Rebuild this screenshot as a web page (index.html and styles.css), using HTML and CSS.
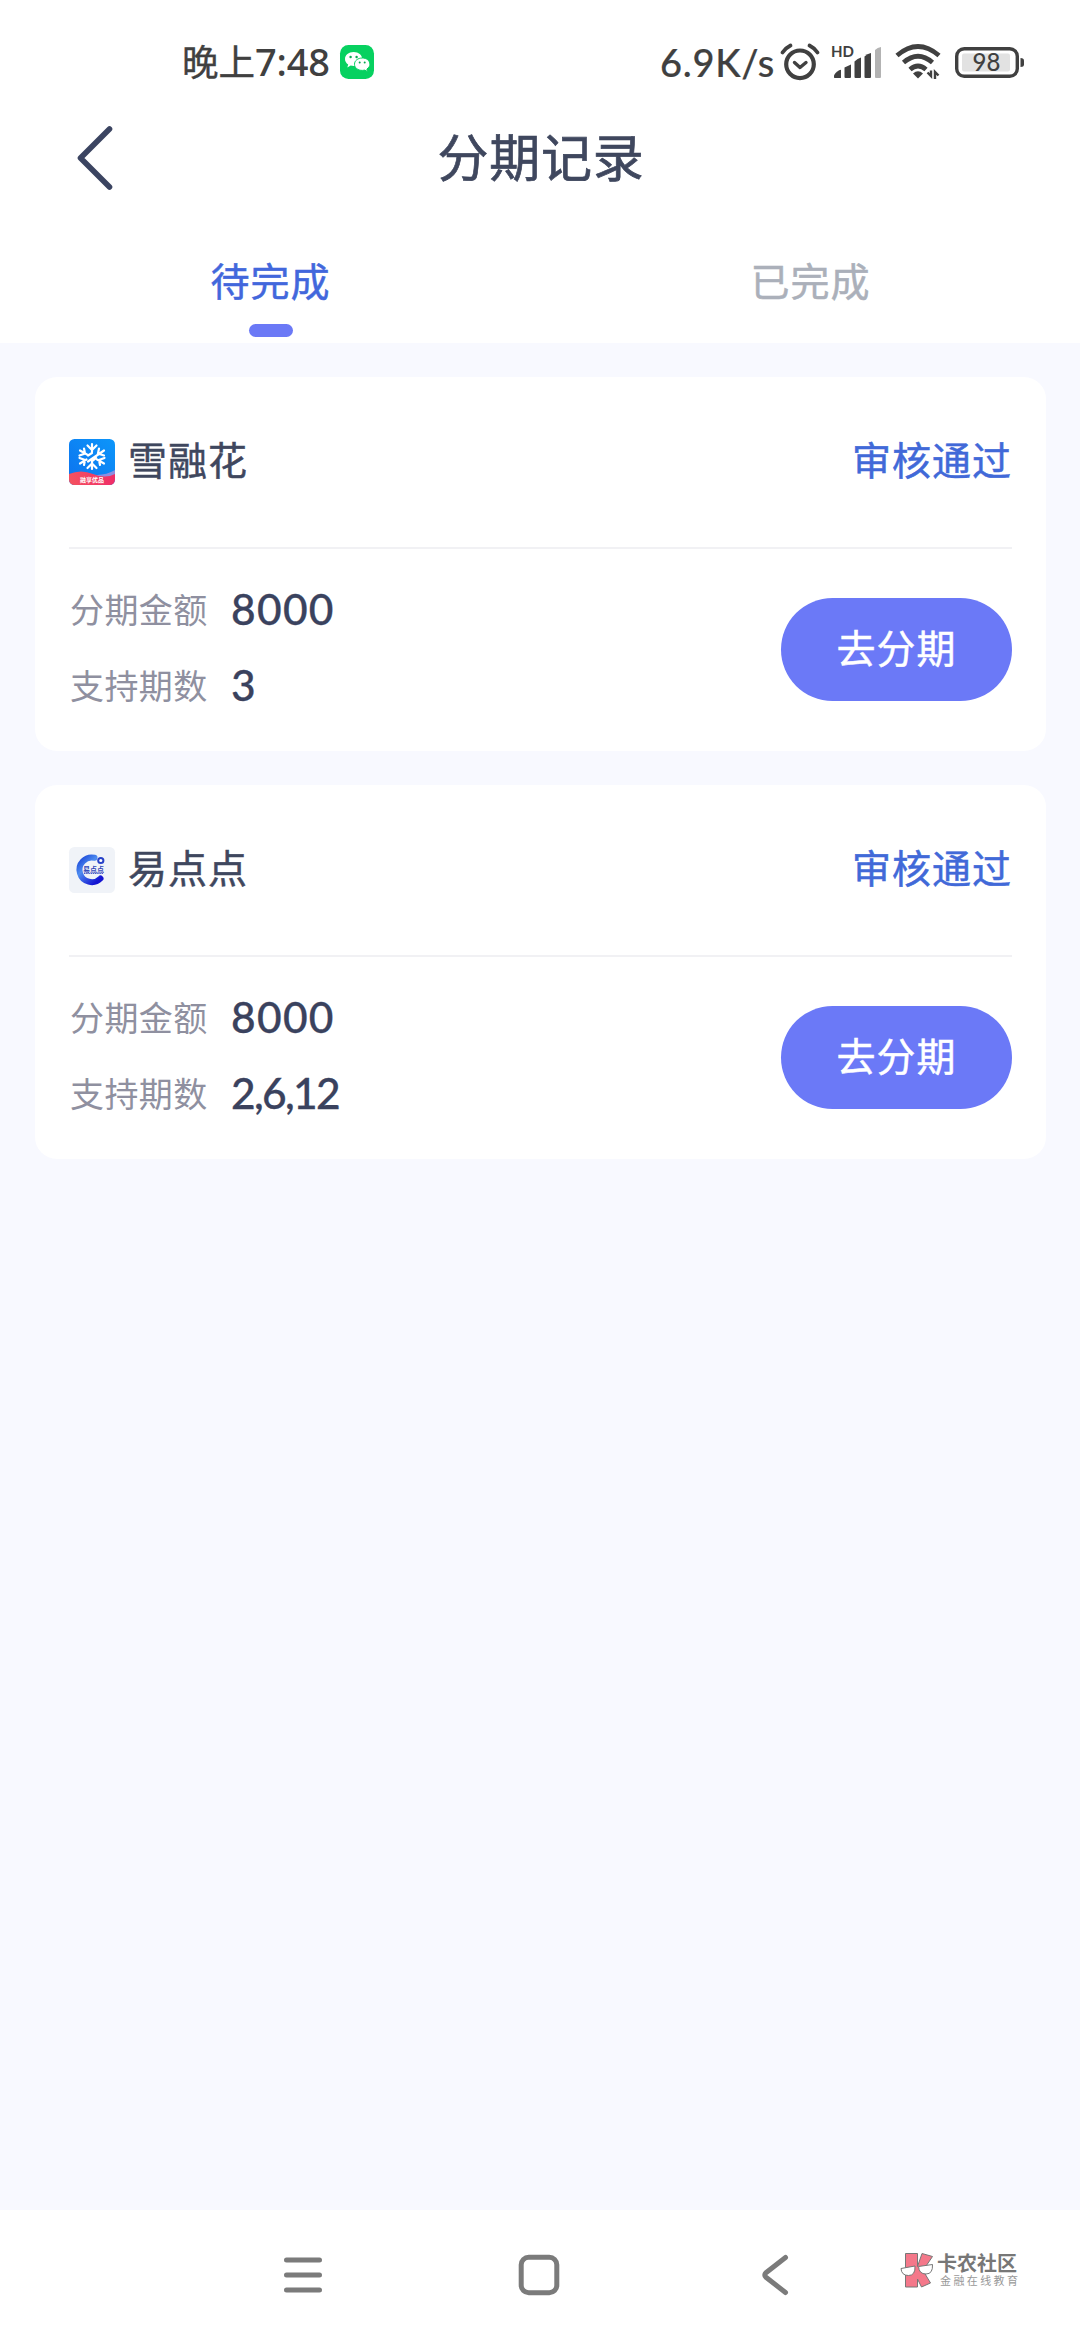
FILE: index.html
```html
<!DOCTYPE html>
<html lang="zh-CN">
<head>
<meta charset="utf-8">
<title>分期记录</title>
<link rel="stylesheet" href="styles.css">
</head>
<body>
<div class="screen">
  <header class="top">
    <div class="status">
      <div class="status-left">
        <span class="clock"><span class="period">晚上</span>7:48</span>
        <svg class="wechat" width="34" height="34" viewBox="0 0 34 34">
          <rect width="34" height="34" rx="8.5" fill="#07d160"/>
          <path d="M13.6 7C8.600 7 5 10 5 14c0 2.300 1.200 4.200 3.200 5.500L7.300 22.500l3.400-1.900c1 .3 1.900.4 2.900.4 5 0 8.600-3 8.600-7S18.600 7 13.600 7z" fill="#fff"/>
          <path d="M22.300 13c-4.500 0-7.800 2.700-7.800 6.200s3.300 6.200 7.800 6.200c.9 0 1.700-.1 2.500-.3l2.900 1.600-.8-2.700c1.900-1.100 3-2.800 3-4.800 0-3.500-3.300-6.200-7.600-6.200z" fill="#fff" stroke="#07d160" stroke-width="1"/>
          <circle cx="10.600" cy="12" r="1.200" fill="#07a850"/><circle cx="16.600" cy="12" r="1.200" fill="#07a850"/>
          <circle cx="19.700" cy="17.500" r="1" fill="#07a850"/><circle cx="24.700" cy="17.500" r="1" fill="#07a850"/>
        </svg>
      </div>
      <div class="status-right">
        <span class="speed">6.9K/s</span>
        <svg class="alarm" width="40" height="38" viewBox="0 0 40 38" fill="none" stroke="#404040">
          <circle cx="20" cy="21.300" r="13.800" stroke-width="4.200"/>
          <path d="M2.500 9.500Q5.500 5 10.500 2.500M37.500 9.500Q34.500 5 29.500 2.500" stroke-width="3.800" stroke-linecap="round"/>
          <path d="M14.500 19.500l5.500 5 6-5" stroke-width="3.400" stroke-linecap="round" stroke-linejoin="round"/>
        </svg>
        <svg class="signal" width="52" height="34" viewBox="0 0 52 34">
          <g fill="#404040">
            <path d="M3 32.500v-2.200q3-4.800 7-5.500v7.700q0 .5-.5.500H3.500z"/>
            <path d="M13.500 22.500l6.500-3v12.500q0 1-1 1h-4.500q-1 0-1-1z"/>
            <path d="M23.500 16.500q3-3 6.500-4v19.500q0 1-1 1h-4.500q-1 0-1-1z"/>
            <path d="M33.500 11.500q2.500-2.800 6.500-3.500v24q0 1-1 1h-4.500q-1 0-1-1z"/>
          </g>
          <path d="M44 5q2.500-2.500 6-3v30q0 1-1 1h-4q-1 0-1-1z" fill="#b3b3b3"/>
          <text x="0" y="12" class="hd">HD</text>
        </svg>
        <svg class="wifi" width="46" height="36" viewBox="0 0 46 36" fill="none" stroke="#404040" stroke-width="4.800">
          <path d="M2 11.500Q23-6.500 44 11.500"/>
          <path d="M8.500 18.500Q23 6 37.500 18.500"/>
          <path d="M15 25.500Q23 18.500 31 25.500"/>
          <path d="M18 29.500q5-4.500 10 0l-5 5z" fill="#404040" stroke="none"/>
          <path d="M32.500 28.500l3.500 3.500V26.500M40 35V28l3.500 3.500" stroke-width="2.400"/>
        </svg>
        <svg class="battery" width="70" height="31" viewBox="0 0 70 31">
          <rect x="1.700" y="1.700" width="60.600" height="27.600" rx="7.500" fill="none" stroke="#404040" stroke-width="3.400"/>
          <rect x="7" y="6.500" width="48" height="18" rx="2" fill="#e2e2e2"/>
          <path d="M65.500 11q3.500 0 3.500 2.500v4q0 2.500-3.500 2.500z" fill="#404040"/>
          <text x="31.500" y="24" class="level">98</text>
        </svg>
      </div>
    </div>
    <div class="titlebar">
      <svg class="back" width="38" height="68" viewBox="0 0 38 68"><path d="M33.500 5L4.500 34l29 29" fill="none" stroke="#3b4461" stroke-width="5.600" stroke-linecap="round" stroke-linejoin="round"/></svg>
      <h1 class="title">分期记录</h1>
    </div>
    <nav class="tabs">
      <div class="tab active">待完成</div>
      <div class="tab">已完成</div>
    </nav>
  </header>
  <main class="list">
    <section class="card">
      <div class="card-head">
        <svg class="logo" width="46" height="46" viewBox="0 0 46 46">
          <defs>
            <clipPath id="tile"><rect width="46" height="46" rx="5.500"/></clipPath>
            <linearGradient id="sky" x1="0" y1="1" x2="1" y2="0"><stop offset="0" stop-color="#0d72ee"/><stop offset="1" stop-color="#0c96fa"/></linearGradient>
            <linearGradient id="ribbon"><stop offset="0" stop-color="#f4525f"/><stop offset="1" stop-color="#f02d68"/></linearGradient>
          </defs>
          <g clip-path="url(#tile)">
            <rect width="46" height="46" fill="url(#sky)"/>
            <path d="M20 35Q34 38 46 31v8H20z" fill="#8e8ee0"/>
            <path d="M0 35Q12 30 24 35T46 35v11H0z" fill="url(#ribbon)"/>
          </g>
          <g fill="none" stroke="#fff" stroke-width="2.200" stroke-linecap="round">
            <path d="M23 5v8M18.500 6.500l4.500 4.500 4.500-4.500M23 22v8M18.500 29l4.500-4.500 4.500 4.500"/>
            <path d="M11 11.500l7 4M10.500 16.500l5.500-2-1-5M35 11.500L19 22.500M30 9.500l-1 5 6 2"/>
            <path d="M11 24.500l6.500-4M10.500 19l5.500 2-1 5M35 24.500l-7-4M35.500 19l-5.500 2 1 5"/>
            <path d="M19 16.500l4-2.500M23 22l4-3"/>
          </g>
          <text x="23" y="43" class="ribbon-text">融享优品</text>
        </svg>
        <h2 class="name">雪融花</h2>
        <span class="state">审核通过</span>
      </div>
      <div class="card-body">
        <dl class="facts">
          <dt>分期金额</dt><dd>8000</dd>
          <dt>支持期数</dt><dd>3</dd>
        </dl>
        <button class="go">去分期</button>
      </div>
    </section>
    <section class="card">
      <div class="card-head">
        <svg class="logo" width="46" height="46" viewBox="0 0 46 46">
          <defs><linearGradient id="swirl" x1="0" y1="0" x2=".8" y2="1"><stop offset="0" stop-color="#1a45d8"/><stop offset=".4" stop-color="#4e8df0"/><stop offset="1" stop-color="#1414d2"/></linearGradient></defs>
          <rect width="46" height="46" rx="5.500" fill="#f0f3f8"/>
          <path d="M25.500 10.800A12.300 12.300 0 1 0 31.500 31.500" fill="none" stroke="url(#swirl)" stroke-width="6" stroke-linecap="round"/>
          <circle cx="31.800" cy="13.500" r="2.600" fill="#fff" stroke="#2742c8" stroke-width="2"/>
          <text x="24.500" y="24.500" class="swirl-text">易点点</text>
          <path d="M15 26.500h19" stroke="#4a5cc8" stroke-width="1" stroke-dasharray="1.500 .7"/>
        </svg>
        <h2 class="name">易点点</h2>
        <span class="state">审核通过</span>
      </div>
      <div class="card-body">
        <dl class="facts">
          <dt>分期金额</dt><dd>8000</dd>
          <dt>支持期数</dt><dd class="terms">2,6,12</dd>
        </dl>
        <button class="go">去分期</button>
      </div>
    </section>
  </main>
  <footer class="navbar">
    <svg class="nav-menu" width="40" height="36" viewBox="0 0 40 36"><path d="M3.500 3h33M3.500 18h33M3.500 33h33" stroke="#7b7b7b" stroke-width="5" stroke-linecap="round"/></svg>
    <svg class="nav-home" width="42" height="42" viewBox="0 0 42 42"><rect x="3.200" y="3.200" width="35.600" height="35.600" rx="7.500" fill="none" stroke="#7b7b7b" stroke-width="5"/></svg>
    <svg class="nav-back" width="28" height="42" viewBox="0 0 28 42"><path d="M24.500 3.500L5 18.700Q2.500 21 5 23.300L24.500 38.500" fill="none" stroke="#7b7b7b" stroke-width="5" stroke-linecap="round"/></svg>
    <div class="brand">
      <svg width="34" height="36" viewBox="0 0 34 36">
        <path d="M5.500 1.500h12v13l4.500-13 10.500 3-9.500 14 7.500 12.500-9 4-4-8v8h-12z" fill="#f4788a" stroke="#777" stroke-width="1"/>
        <path d="M1 16.500l14-2.500q.5 9.500-6.500 9.500T1 16.500zM18.500 14.500l14-2q.5 9.500-6.500 9.500T18.500 14.500z" fill="#fff" stroke="#777" stroke-width="1"/>
      </svg>
      <div class="brand-text"><span class="brand-name">卡农社区</span><span class="brand-sub">金融在线教育</span></div>
    </div>
  </footer>
</div>
</body>
</html>
```

FILE: styles.css
```css
* { box-sizing: border-box; margin: 0; padding: 0; }

body {
  background: #f8f9ff;
  color: #3f475e;
  font-family: Lato, "Noto Sans CJK SC", sans-serif;
}

svg { display: block; flex: none; overflow: visible; }

.screen {
  display: flex;
  flex-direction: column;
  width: 1080px;
  height: 2340px;
  overflow: hidden;
}

/* Header */
.top { height: 343px; background: #fff; }

.status {
  display: flex;
  justify-content: space-between;
  align-items: center;
  height: 102px;
  padding: 22px 55px 0 182px;
  color: #404040;
}

.status-left,
.status-right { display: flex; align-items: center; height: 60px; }

.clock {
  width: 148px;
  margin: -2px 10px 0 0;
  font: 500 38px/60px "Noto Sans", "Noto Sans CJK SC", sans-serif;
  letter-spacing: -0.2px;
  white-space: nowrap;
}

.period { font-family: "Noto Sans CJK SC", sans-serif; font-size: 36.5px; font-weight: 400; letter-spacing: 0; -webkit-text-stroke: 0.4px; }

.speed {
  width: 114px;
  margin: -1px 6px 0 0;
  font-size: 38px;
  font-weight: 500;
  letter-spacing: 0.7px;
  line-height: 60px;
  white-space: nowrap;
  -webkit-text-stroke: 0.2px;
}

.alarm { margin-right: 11px; }
.signal { margin-right: 12px; }
.wifi { margin-right: 14px; }
.hd { font: 700 15px Lato, sans-serif; fill: #404040; }
.level { font: 500 24px Lato, sans-serif; fill: #404040; text-anchor: middle; }

.titlebar {
  display: grid;
  grid-template-columns: 1fr auto 1fr;
  align-items: center;
  height: 112px;
  padding: 0 76px;
}

.title { padding-left: 2px; font-size: 51px; font-weight: 400; line-height: 74px; letter-spacing: 0.8px; -webkit-text-stroke: 0.7px; }

.tabs { display: grid; grid-template-columns: 1fr 1fr; height: 129px; }

.tab {
  display: flex;
  flex-direction: column;
  align-items: center;
  padding: 37px 0 0 1px;
  font-size: 39px;
  line-height: 60px;
  letter-spacing: 1px;
  color: #abb0ba;
  -webkit-text-stroke: 0.5px;
}

.tab.active { color: #4267dc; }

.tab.active::after {
  content: "";
  width: 44px;
  height: 13px;
  margin-top: 13px;
  border-radius: 6.5px;
  background: #6b79f6;
}

/* Records */
.list {
  display: flex;
  flex: 1;
  flex-direction: column;
  gap: 34px;
  padding: 34px 34px 0 35px;
}

.card { height: 374px; padding: 0 34px; border-radius: 22px; background: #fff; }

.card-head {
  display: flex;
  align-items: center;
  height: 172px;
  padding-bottom: 1px;
  border-bottom: 2px solid #f1f1f4;
}

.name,
.state { margin-top: -3px; font-size: 39px; font-weight: 400; line-height: 60px; letter-spacing: 1px; -webkit-text-stroke: 0.5px; }

.name { margin-left: 13px; }
.state { margin-left: auto; color: #4169d8; }

.card-body {
  display: flex;
  justify-content: space-between;
  align-items: flex-start;
  padding-top: 21px;
}

.facts { display: grid; grid-template-columns: 162px auto; grid-auto-rows: 76px; align-items: center; }

.facts dt { padding-left: 1px; font-size: 34px; letter-spacing: 0.4px; color: #8f90a0; }

.facts dd { font-size: 42.5px; font-weight: 500; letter-spacing: 1.3px; color: #3a425e; -webkit-text-stroke: 0.3px; }

.facts .terms { letter-spacing: -1.7px; }

.go {
  width: 231px;
  height: 103px;
  margin-top: 28px;
  padding-bottom: 3px;
  border: 0;
  border-radius: 52px;
  background: #6b79f7;
  color: #fff;
  font: 400 39px/60px Lato, "Noto Sans CJK SC", sans-serif;
  letter-spacing: 1px;
  -webkit-text-stroke: 0.5px;
}

.ribbon-text { font: 700 6px "Noto Sans CJK SC", sans-serif; fill: #fff; text-anchor: middle; }
.swirl-text { font: 700 7px "Noto Sans CJK SC", sans-serif; fill: #3247b8; text-anchor: middle; }

/* System navigation */
.navbar {
  display: flex;
  align-items: center;
  height: 130px;
  padding-left: 283px;
  background: #fff;
}

.nav-home { margin-left: 195px; }
.nav-back { margin-left: 201px; }

.brand { display: flex; align-items: center; gap: 3px; margin: -10px 0 0 111px; }
.brand-text { display: flex; flex-direction: column; white-space: nowrap; }
.brand-name { font-size: 20px; font-weight: 700; line-height: 20px; color: #777; }
.brand-sub { padding-left: 3px; font-size: 11px; line-height: 15px; letter-spacing: 2.4px; color: #999; }
```
